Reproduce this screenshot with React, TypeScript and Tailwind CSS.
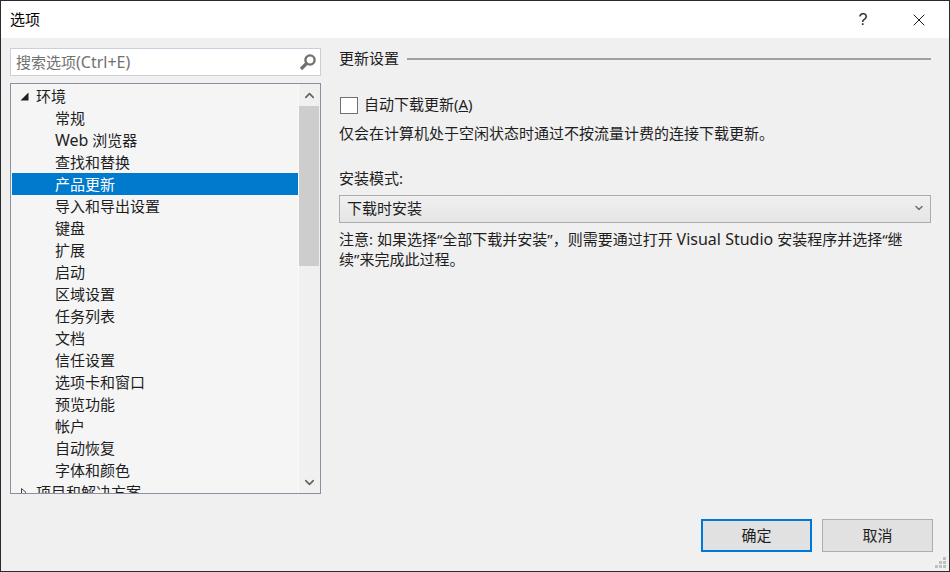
import { ChevronDown, ChevronUp, X } from 'lucide-react'

const items = [
  '常规',
  'Web 浏览器',
  '查找和替换',
  '产品更新',
  '导入和导出设置',
  '键盘',
  '扩展',
  '启动',
  '区域设置',
  '任务列表',
  '文档',
  '信任设置',
  '选项卡和窗口',
  '预览功能',
  '帐户',
  '自动恢复',
  '字体和颜色',
]

function SearchIcon() {
  return (
    <svg width="18" height="18" viewBox="0 0 18 18" fill="none">
      <circle cx="11" cy="7" r="4.6" stroke="#717171" strokeWidth="2.4" />
      <path d="M7.5 10.5L2 16" stroke="#717171" strokeWidth="3.2" />
    </svg>
  )
}

function Tree() {
  return (
    <div className="flex h-[411px] border border-[#8e8f9e] bg-[#f5f5f5]">
      <div className="flex-1 overflow-hidden pt-px pl-px">
        <div className="flex h-[22px] items-center pl-[8px]">
          <svg width="9" height="9" viewBox="0 0 9 9" className="mr-[7px]">
            <path d="M8.5 0.5V8.5H0.5Z" fill="#1e1e1e" />
          </svg>
          <span>环境</span>
        </div>
        {items.map((item) => (
          <div
            key={item}
            className={`flex h-[22px] items-center pl-[43px] ${item === '产品更新' ? 'bg-[#007acc] text-white' : ''}`}
          >
            {item === 'Web 浏览器' ? (
              <span>
                <span className="text-[16px]">Web</span> 浏览器
              </span>
            ) : (
              item
            )}
          </div>
        ))}
        <div className="flex h-[22px] items-center pl-[8px]">
          <svg width="9" height="9" viewBox="0 0 9 9" className="mr-[7px]">
            <path d="M1.5 0.5L6 4.5L1.5 8.5Z" fill="none" stroke="#444" />
          </svg>
          <span>项目和解决方案</span>
        </div>
      </div>
      <div className="flex w-[22px] flex-col border-l border-[#fafafa] bg-[#f0f0f0]">
        <div className="flex h-[22px] items-center justify-center text-[#606060]">
          <ChevronUp size={15} strokeWidth={2.5} />
        </div>
        <div className="mr-px h-[160px] bg-[#cdcdcd]" />
        <div className="flex-1" />
        <div className="flex h-[22px] items-center justify-center text-[#606060]">
          <ChevronDown size={15} strokeWidth={2.5} />
        </div>
      </div>
    </div>
  )
}

export default function App() {
  return (
    <div
      className="relative flex h-[572px] w-[950px] flex-col border border-[#2b2b2b] bg-[#f0f0f0] text-[15px] text-[#1e1e1e]"
      style={{ fontFamily: '"Noto Sans", "Noto Sans CJK SC", sans-serif' }}
    >
      <div className="flex h-[37px] items-center bg-white pl-[9px]">
        <span className="flex-1 text-black">选项</span>
        <span className="w-[24px] text-center text-[16px]" style={{ fontFamily: '"Liberation Sans", sans-serif' }}>?</span>
        <X size={20} strokeWidth={1.1} className="mr-[20px] ml-[34px] text-black" />
      </div>

      <div className="flex flex-1 pt-[10px] pr-[18px] pl-[9px]">
        <div className="w-[311px]">
          <div className="mb-[7px] flex h-[28px] items-center border border-[#ccceDB] bg-white pr-[3px] pl-[5px] text-[#717171]">
            <span className="flex-1">搜索选项<span className="text-[16px]">(Ctrl+E)</span></span>
            <SearchIcon />
          </div>
          <Tree />
        </div>

        <div className="ml-[18px] flex-1">
          <div className="flex h-[21px] items-center">
            <span>更新设置</span>
            <div className="ml-[8px] h-[2px] flex-1 bg-[#a0a0a0]" />
          </div>
          <div className="mt-[24px] flex h-[22px] items-center">
            <div className="mt-[2px] mr-[6px] ml-px h-[17px] w-[18px] border border-[#717171] bg-white" />
            <span>自动下载更新(<span className="underline">A</span>)</span>
          </div>
          <div className="mt-[7px] leading-[22px]">仅会在计算机处于空闲状态时通过不按流量计费的连接下载更新。</div>
          <div className="mt-[23px] leading-[22px]">安装模式:</div>
          <div className="mt-[6px] flex h-[28px] items-center border border-[#acacac] bg-gradient-to-b from-[#f0f0f0] to-[#e5e5e5] pr-[5px] pb-[2px] pl-[7px]">
            <span className="flex-1">下载时安装</span>
            <ChevronDown size={12} strokeWidth={3} className="text-[#707070]" />
          </div>
          <div className="mt-[6px] leading-[20px]">
            注意: 如果选择“全部下载并安装”，则需要通过打开 <span className="text-[16px]">Visual Studio</span> 安装程序并选择“继
            <br />
            续”来完成此过程。
          </div>
        </div>
      </div>

      <div className="flex h-[52px] items-start justify-end gap-[10px] pr-[16px]">
        <button className="h-[33px] w-[111px] border-2 border-[#0078d7] bg-[#e1e1e1] text-[#1e1e1e]">确定</button>
        <button className="h-[33px] w-[111px] border border-[#adadad] bg-[#e1e1e1] text-[#1e1e1e]">取消</button>
      </div>

      <svg width="14" height="14" viewBox="0 0 14 14" className="absolute right-px bottom-px" fill="#c0c0c0">
        <rect x="9" y="1" width="3" height="3" />
        <rect x="5" y="5" width="3" height="3" />
        <rect x="9" y="5" width="3" height="3" />
        <rect x="1" y="9" width="3" height="3" />
        <rect x="5" y="9" width="3" height="3" />
        <rect x="9" y="9" width="3" height="3" />
      </svg>
    </div>
  )
}
